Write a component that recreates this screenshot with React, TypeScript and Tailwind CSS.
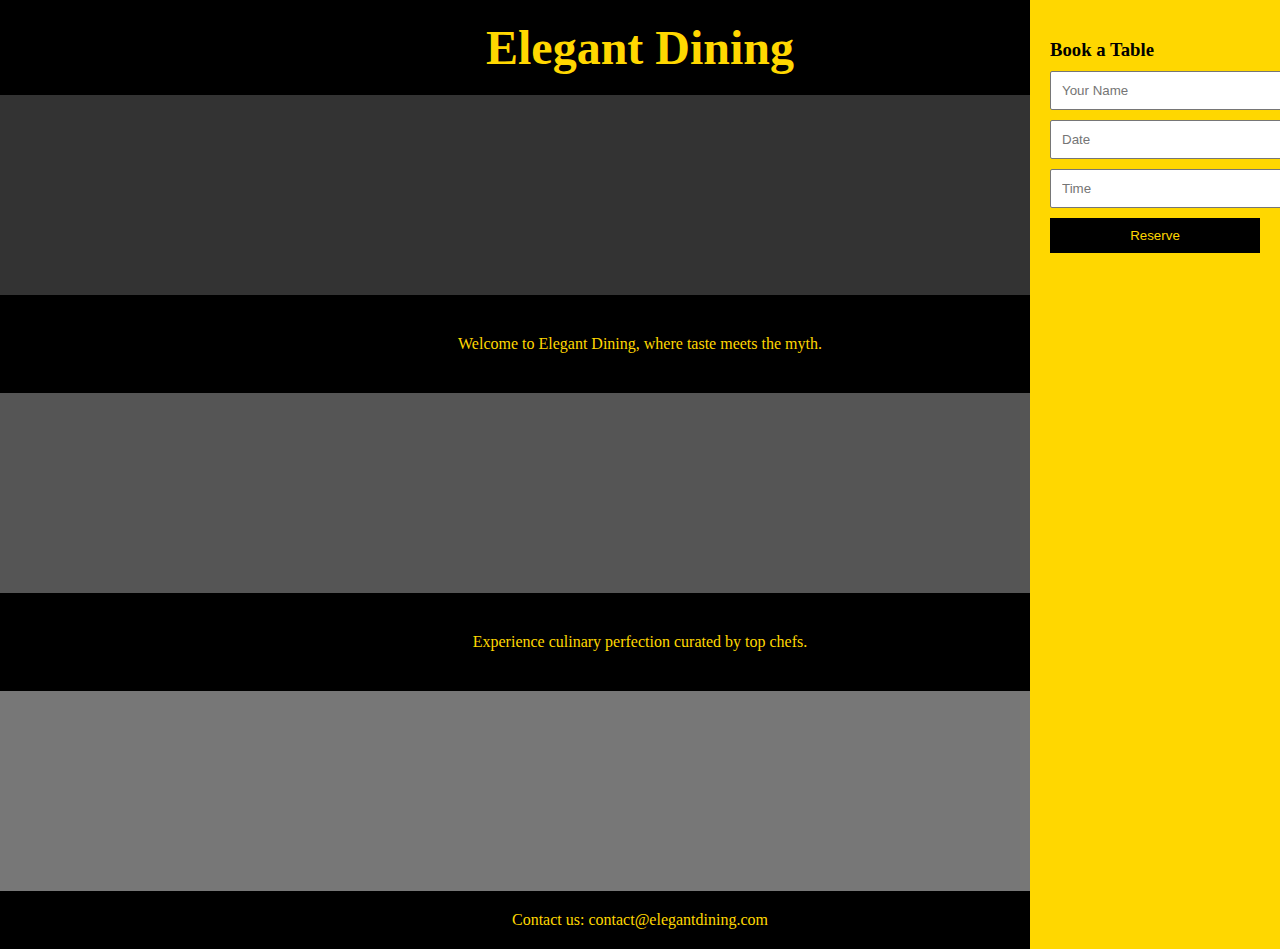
const serif = "font-['Liberation_Serif','Times_New_Roman',serif]"
const sans = "font-['Liberation_Sans',Arial,sans-serif]"

function Banner({ shade }: { shade: string }) {
  return <div className={`h-[200px] w-full ${shade}`} />
}

function Blurb({ text }: { text: string }) {
  return (
    <section className="bg-black py-[40px] text-center">
      <p className="text-[16px] leading-[18px] text-[#FFD700]">{text}</p>
    </section>
  )
}

function BookingPanel() {
  const fields = ["Your Name", "Date", "Time"]
  return (
    <aside className="fixed top-0 right-0 h-full w-[250px] overflow-hidden bg-[#FFD700] p-[20px]">
      <h2 className={`${serif} mt-[19px] mb-[10px] text-[18.72px] leading-[22px] font-bold text-black`}>
        Book a Table
      </h2>
      <form className="flex flex-col gap-[10px]" onSubmit={(e) => e.preventDefault()}>
        {fields.map((f) => (
          <input
            key={f}
            type="text"
            placeholder={f}
            className={`${sans} h-[39px] w-[232px] rounded-[2px] border border-[#767676] bg-white px-[11px] text-[13.33px] text-black placeholder:text-[#757575]`}
          />
        ))}
        <button
          type="submit"
          className={`${sans} h-[35px] w-[210px] bg-black text-[13.33px] text-[#FFD700]`}
        >
          Reserve
        </button>
      </form>
    </aside>
  )
}

export default function App() {
  return (
    <div className={`${serif} min-h-[949px] bg-black`}>
      <header className="bg-black py-[20px] text-center">
        <h1 className="text-[48px] leading-[55px] font-bold text-[#FFD700]">Elegant Dining</h1>
      </header>
      <Banner shade="bg-[#333333]" />
      <Blurb text="Welcome to Elegant Dining, where taste meets the myth." />
      <Banner shade="bg-[#555555]" />
      <Blurb text="Experience culinary perfection curated by top chefs." />
      <Banner shade="bg-[#777777]" />
      <footer className="bg-black py-[20px] text-center">
        <p className="text-[16px] leading-[18px] text-[#FFD700]">
          Contact us: contact@elegantdining.com
        </p>
      </footer>
      <BookingPanel />
    </div>
  )
}
